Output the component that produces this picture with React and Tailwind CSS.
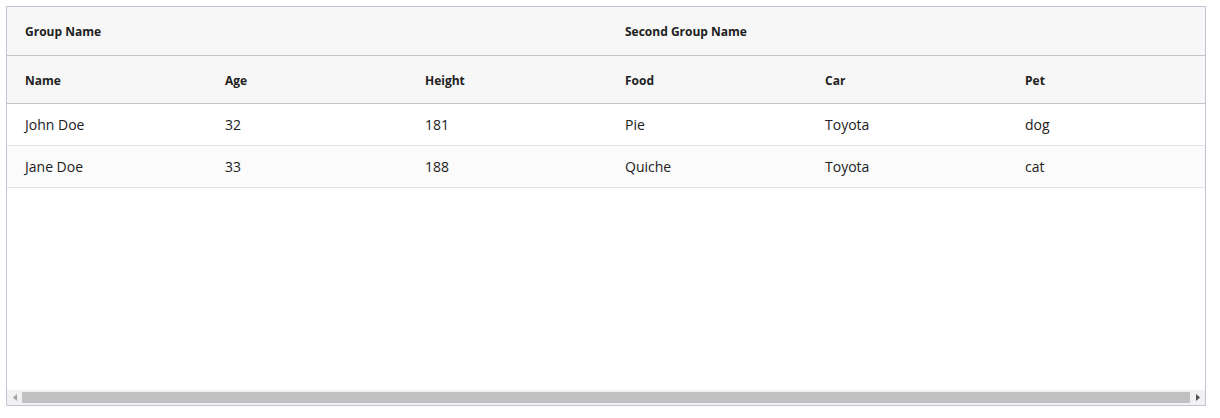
export default function App() {
  const cols = ["Name", "Age", "Height", "Food", "Car", "Pet"];
  const rows = [
    ["John Doe", "32", "181", "Pie", "Toyota", "dog"],
    ["Jane Doe", "33", "188", "Quiche", "Toyota", "cat"],
  ];
  return (
    <div className="bg-white w-[1220px] h-[418px] pt-[6px] pl-[6px]" style={{ fontFamily: '"Open Sans", "Noto Sans", sans-serif' }}>
      <div className="w-[1200px] h-[400px] border border-[#c6c3d3] flex flex-col overflow-hidden">
        <div className="flex-1 overflow-hidden">
          <div className="w-[1200px] text-[#212121]">
            <div className="grid grid-cols-[600px_600px] h-[49px] bg-[#f7f7f7] border-b border-[#c4c4cc] text-[12px] font-bold">
              <div className="flex items-center pl-[18px] pt-[2px]">Group Name</div>
              <div className="flex items-center pl-[18px] pt-[2px]">Second Group Name</div>
            </div>
            <div className="grid grid-cols-[repeat(6,200px)] h-[48px] bg-[#f7f7f7] border-b border-[#c4c4cc] text-[12px] font-bold">
              {cols.map((c) => (
                <div key={c} className="flex items-center pl-[18px] pt-[3px]">{c}</div>
              ))}
            </div>
            {rows.map((r, i) => (
              <div
                key={i}
                className={
                  "grid grid-cols-[repeat(6,200px)] h-[42px] border-b border-[#e2e2e8] text-[14px] " +
                  (i % 2 === 1 ? "bg-[#fbfbfb]" : "bg-white")
                }
              >
                {r.map((v, j) => (
                  <div key={j} className="flex items-center pl-[18px]">{v}</div>
                ))}
              </div>
            ))}
          </div>
        </div>
        <div className="h-[15px] flex bg-[#f1f1f1] shrink-0">
          <div className="w-[15px] flex items-center justify-center">
            <svg width="4" height="7" viewBox="0 0 4 7">
              <polygon points="4,0 4,7 0,3.5" fill="#a3a3a3" />
            </svg>
          </div>
          <div className="flex-1 my-[2px] bg-[#c1c1c1]" />
          <div className="w-[15px] flex items-center justify-center">
            <svg width="4" height="7" viewBox="0 0 4 7">
              <polygon points="0,0 0,7 4,3.5" fill="#505050" />
            </svg>
          </div>
        </div>
      </div>
    </div>
  );
}
